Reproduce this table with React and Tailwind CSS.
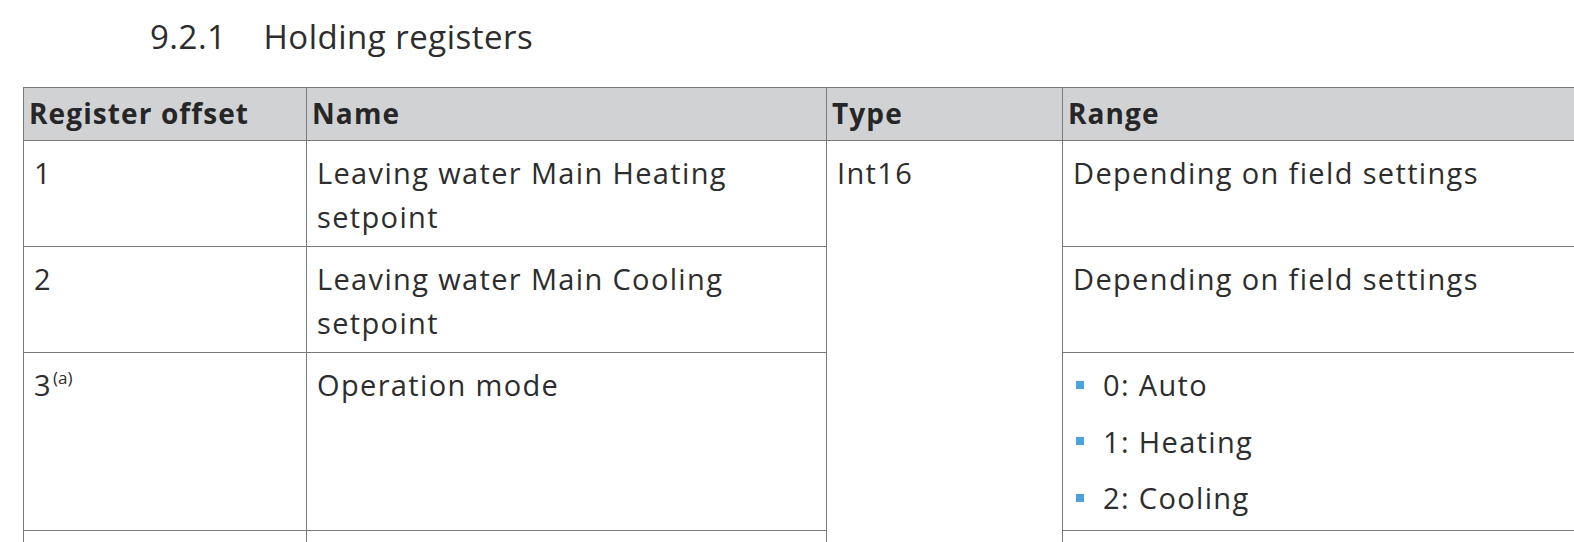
import React from "react";

const cellBorder = "border border-[#7a7a7a]";
const bodyCell = `${cellBorder} px-[10px] pt-[10px] align-top`;

export default function App() {
  return (
    <div
      className="h-[542px] w-full overflow-hidden bg-white text-[#2d2d2d]"
      style={{ fontFamily: "'Open Sans', 'Noto Sans', 'Liberation Sans', sans-serif" }}
    >
      <h2 className="box-border h-[87px] pl-[150px] pt-[17px] text-[33px] font-normal leading-[40px] tracking-[0.5px]">
        9.2.1<span className="inline-block w-[37px]"></span>Holding registers
      </h2>
      <div className="pl-[23px]">
        <table className="w-[1660px] table-fixed border-collapse">
          <colgroup>
            <col className="w-[283px]" />
            <col className="w-[520px]" />
            <col className="w-[236px]" />
            <col className="w-[621px]" />
          </colgroup>
          <thead>
            <tr className="h-[53px] bg-[#d1d2d4]">
              {["Register offset", "Name", "Type", "Range"].map((h) => (
                <th
                  key={h}
                  className={`${cellBorder} px-[5px] pt-[10px] text-left align-top text-[28px] font-bold leading-[30px] tracking-[1.1px] text-[#262626]`}
                >
                  {h}
                </th>
              ))}
            </tr>
          </thead>
          <tbody className="text-[29px] leading-[43.5px] tracking-[1.35px]">
            <tr className="h-[106px]">
              <td className={bodyCell}>1</td>
              <td className={bodyCell}>
                Leaving water Main Heating
                <br />
                setpoint
              </td>
              <td rowSpan={4} className={bodyCell}>
                Int16
              </td>
              <td className={bodyCell}>Depending on field settings</td>
            </tr>
            <tr className="h-[106px]">
              <td className={bodyCell}>2</td>
              <td className={bodyCell}>
                Leaving water Main Cooling
                <br />
                setpoint
              </td>
              <td className={bodyCell}>Depending on field settings</td>
            </tr>
            <tr className="h-[178px]">
              <td className={bodyCell}>
                3
                <sup className="relative top-[-12px] ml-[1px] align-baseline text-[17px] leading-none tracking-normal">
                  (a)
                </sup>
              </td>
              <td className={bodyCell}>Operation mode</td>
              <td className={bodyCell}>
                <ul className="flex flex-col gap-[13px]">
                  {["0: Auto", "1: Heating", "2: Cooling"].map((t) => (
                    <li key={t} className="flex items-center">
                      <span className="ml-[3px] mr-[19px] inline-block h-[8px] w-[8px] bg-[#4aa3df]"></span>
                      <span>{t}</span>
                    </li>
                  ))}
                </ul>
              </td>
            </tr>
            <tr className="h-[80px]">
              <td className={bodyCell}></td>
              <td className={bodyCell}></td>
              <td className={bodyCell}></td>
            </tr>
          </tbody>
        </table>
      </div>
    </div>
  );
}
